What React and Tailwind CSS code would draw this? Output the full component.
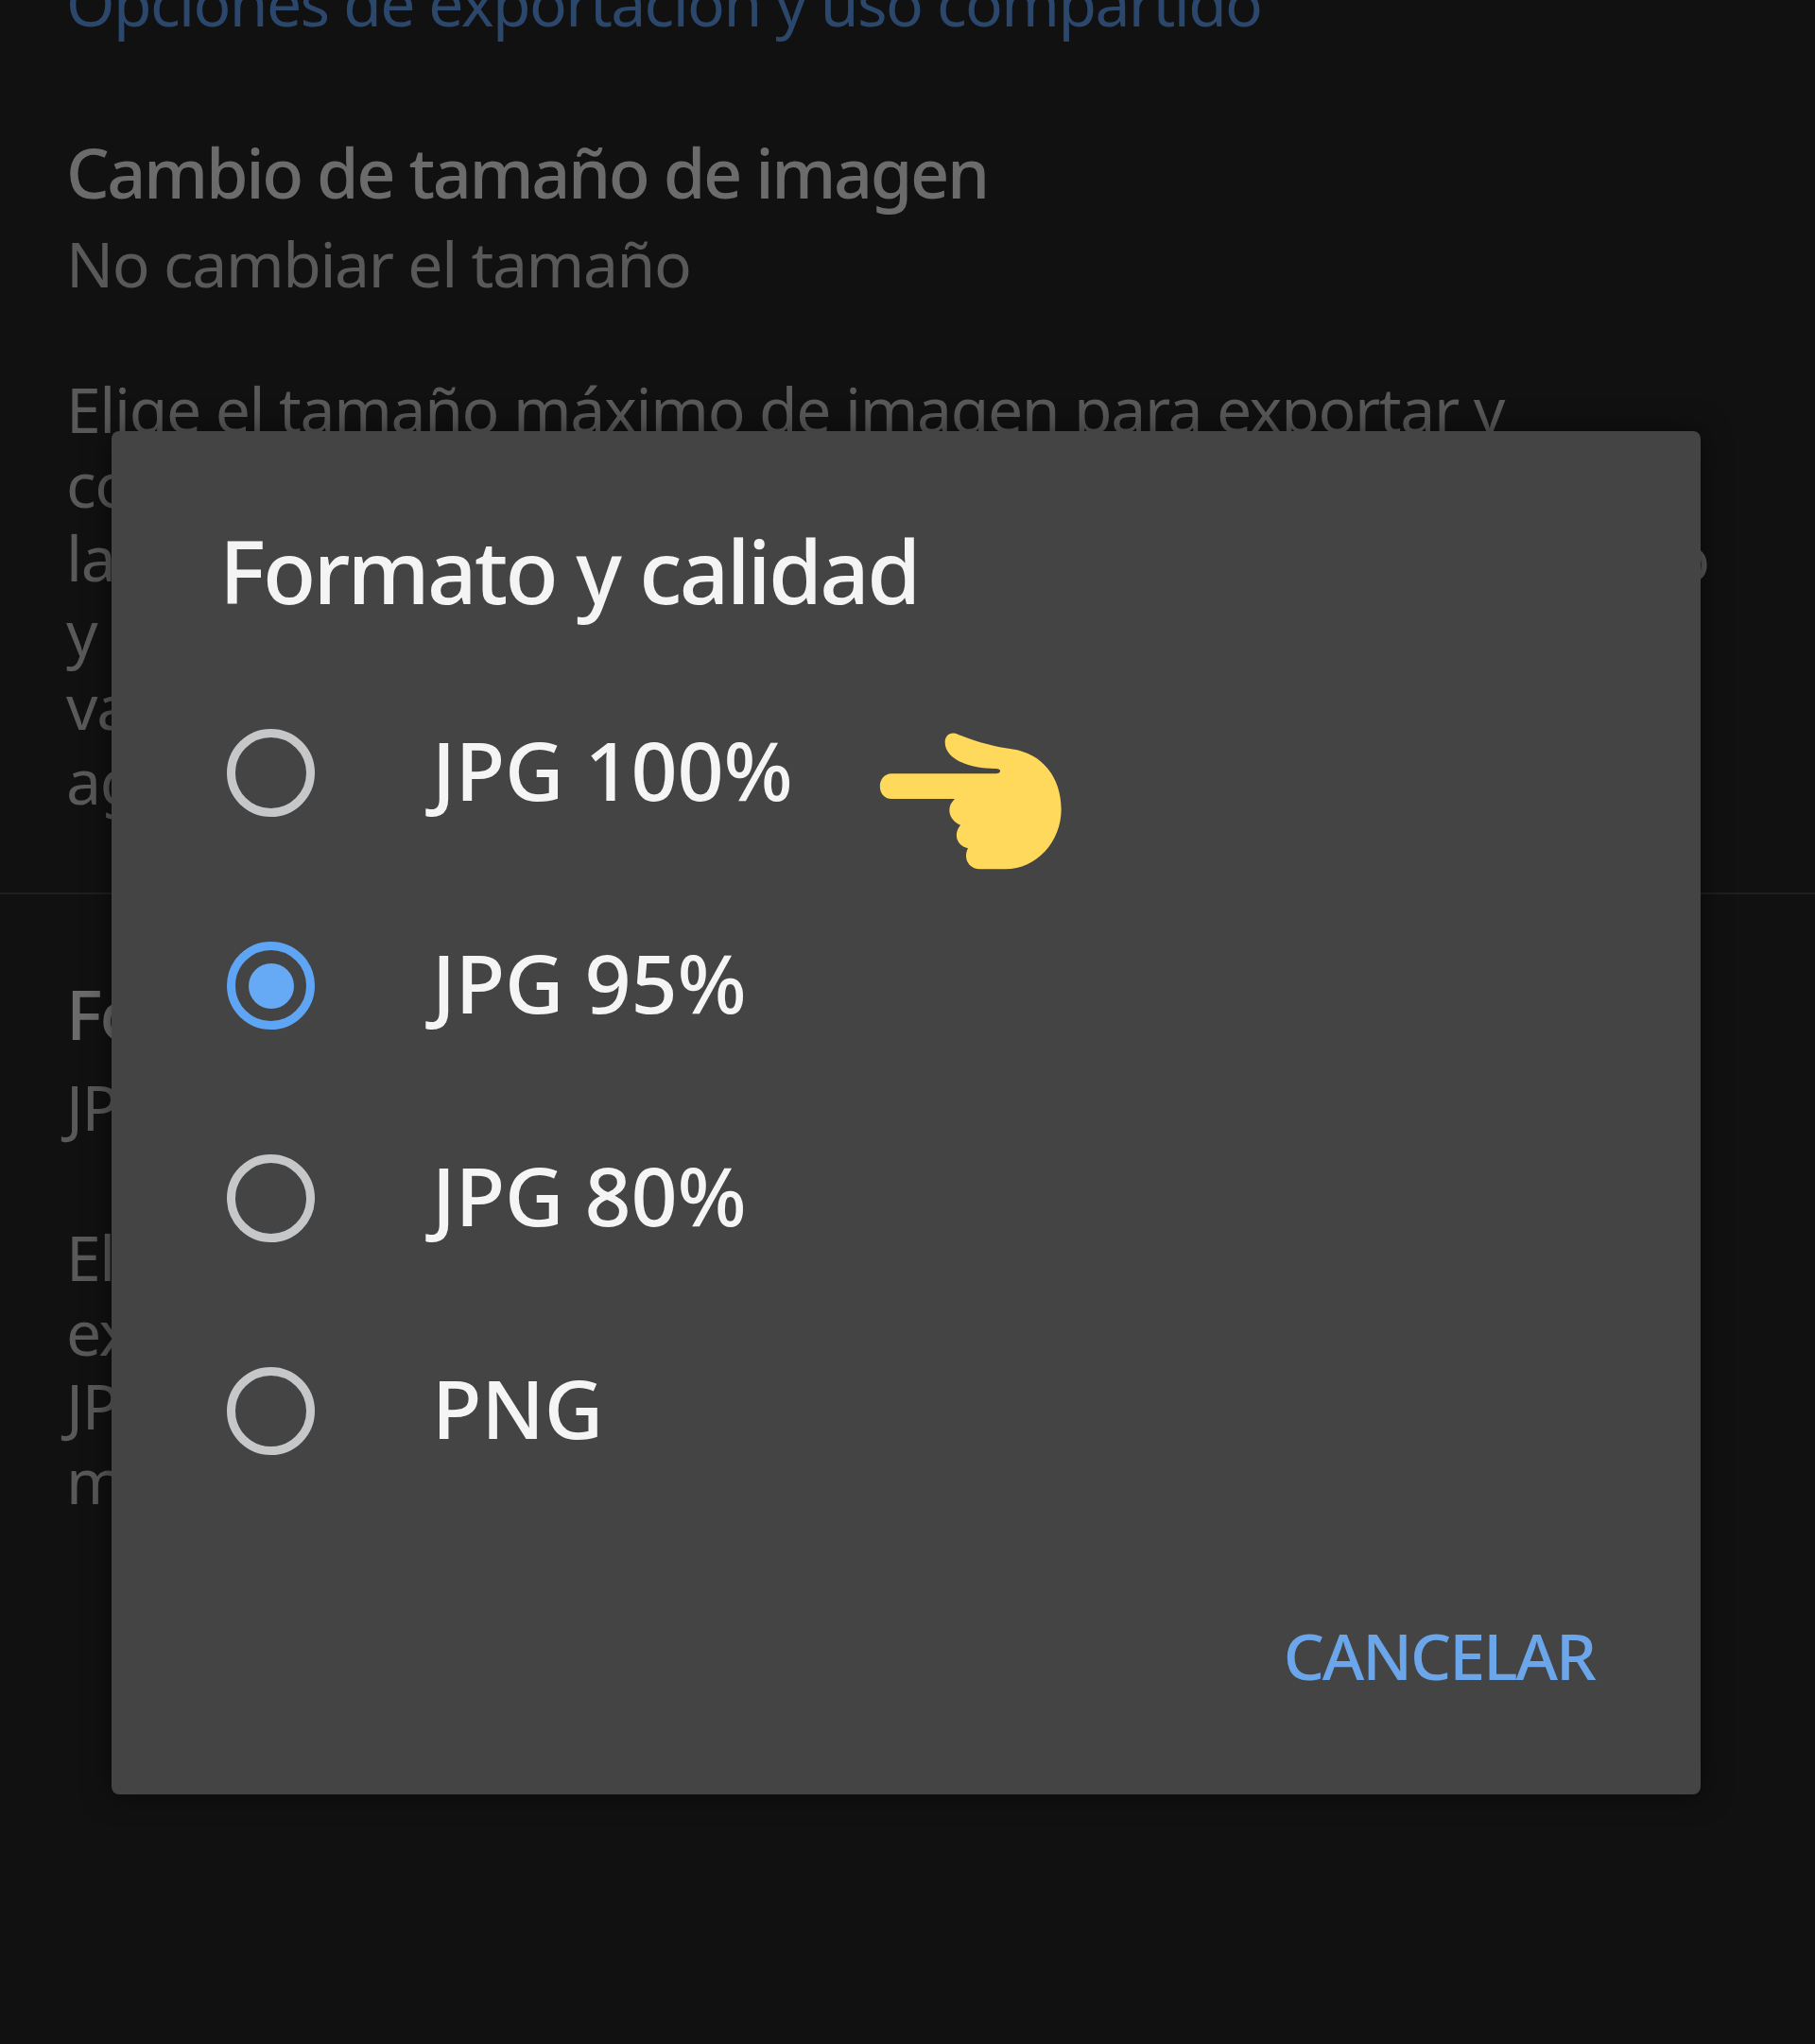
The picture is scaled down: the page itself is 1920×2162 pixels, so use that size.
const font = { fontFamily: '"Noto Sans", sans-serif' };

function Hand() {
  return (
    <svg width="240" height="190" viewBox="0 0 720 570" className="block">
      <path
        fill="#FFD95C"
        d="M130,205 L460,205 C478,205 480,189 460,189 C390,190 299,165 299,105 C299,85 315,70 340,80 C400,105 460,120 510,127 C610,140 668,220 668,318 C668,420 590,508 490,508 L410,508 C375,508 355,475 372,442 C340,435 322,400 348,368 C315,355 298,315 330,285 L130,285 C80,285 80,205 130,205 Z"
      />
    </svg>
  );
}

function Radio({ selected }) {
  return (
    <div
      className={
        selected
          ? "flex h-[93px] w-[93px] shrink-0 items-center justify-center rounded-full border-[9px] border-[#5ea5f5]"
          : "flex h-[93px] w-[93px] shrink-0 items-center justify-center rounded-full border-[9px] border-[#c6c7c8]"
      }
    >
      {selected ? <div className="h-[48px] w-[48px] rounded-full bg-[#66a9f5]" /> : null}
    </div>
  );
}

function Option({ label, selected, hand }) {
  return (
    <div className="relative flex h-[225px] items-center">
      <Radio selected={selected} />
      <span className="ml-[124px] -mt-[8px] whitespace-nowrap text-[86px] font-medium leading-none tracking-[-0.2px] text-[#f5f5f5]">{label}</span>
      {hand ? (
        <div className="absolute left-[660px] top-[45px]">
          <Hand />
        </div>
      ) : null}
    </div>
  );
}

const paraA = [
  "Elige el tamaño máximo de imagen para exportar y",
  "compartir. Las imágenes más grandes ocuparán más",
  "la memoria del dispositivo, pero tendrán un mejor tamaño",
  "y nitidez. Las imágenes más pequeñas se cargan",
  "varias veces más rápido y usan menos",
  "agua.",
];
const paraB = [
  "Elige el formato y la calidad de imagen para",
  "exportar y compartir. Las imágenes",
  "JPG son más pequeñas y PNG",
  "más grandes.",
];

export default function App() {
  return (
    <div className="relative h-[2162px] w-[1920px] overflow-hidden bg-[#111111]" style={font}>
      <div className="-mt-[40px] flex flex-col whitespace-nowrap px-[70px]">
        <div className="h-[84px] text-[66px] leading-[84px] tracking-[-1.6px] text-[#2c476c]">Opciones de exportación y uso compartido</div>
        <div className="mt-[96px] h-[84px] text-[72px] font-medium leading-[84px] tracking-[-2.4px] text-[#6a6b6a]">Cambio de tamaño de imagen</div>
        <div className="mt-[19px] h-[70px] text-[66px] leading-[70px] tracking-[-1.4px] text-[#585958]">No cambiar el tamaño</div>
        <div className="mt-[80px] flex flex-col text-[66px] leading-[78.5px] tracking-[-1.35px] text-[#585958]">
          {paraA.map((l) => (
            <div key={l}>{l}</div>
          ))}
        </div>
      </div>
      <div className="mt-[80px] h-[2px] w-full bg-[#1e1f1f]" />
      <div className="flex flex-col whitespace-nowrap px-[70px]">
        <div className="mt-[84px] h-[84px] text-[72px] font-medium leading-[84px] tracking-[-2.4px] text-[#6a6b6a]">Formato y calidad</div>
        <div className="mt-[21px] h-[70px] text-[66px] leading-[70px] tracking-[-1.4px] text-[#585958]">JPG 95%</div>
        <div className="mt-[85px] flex flex-col text-[66px] leading-[78.5px] tracking-[-1.35px] text-[#585958]">
          {paraB.map((l) => (
            <div key={l}>{l}</div>
          ))}
        </div>
      </div>

      <div className="absolute left-[118px] top-[456px] flex h-[1442px] w-[1681px] flex-col rounded-[8px] bg-[#444444] pl-[122px] pr-[112px] shadow-[0_0_30px_rgba(0,0,0,0.5)]">
        <div className="-ml-[8px] mt-[88px] h-[120px] text-[92px] font-medium leading-[120px] tracking-[-2.7px] text-[#f4f4f4]">Formato y calidad</div>
        <div className="mt-[41px] flex flex-col">
          <Option label="JPG 100%" hand />
          <Option label="JPG 95%" selected />
          <Option label="JPG 80%" />
          <Option label="PNG" />
        </div>
        <div className="mt-[101px] text-right text-[68px] font-medium leading-[90px] tracking-[-2px] text-[#6ba6ea]">CANCELAR</div>
      </div>
    </div>
  );
}
